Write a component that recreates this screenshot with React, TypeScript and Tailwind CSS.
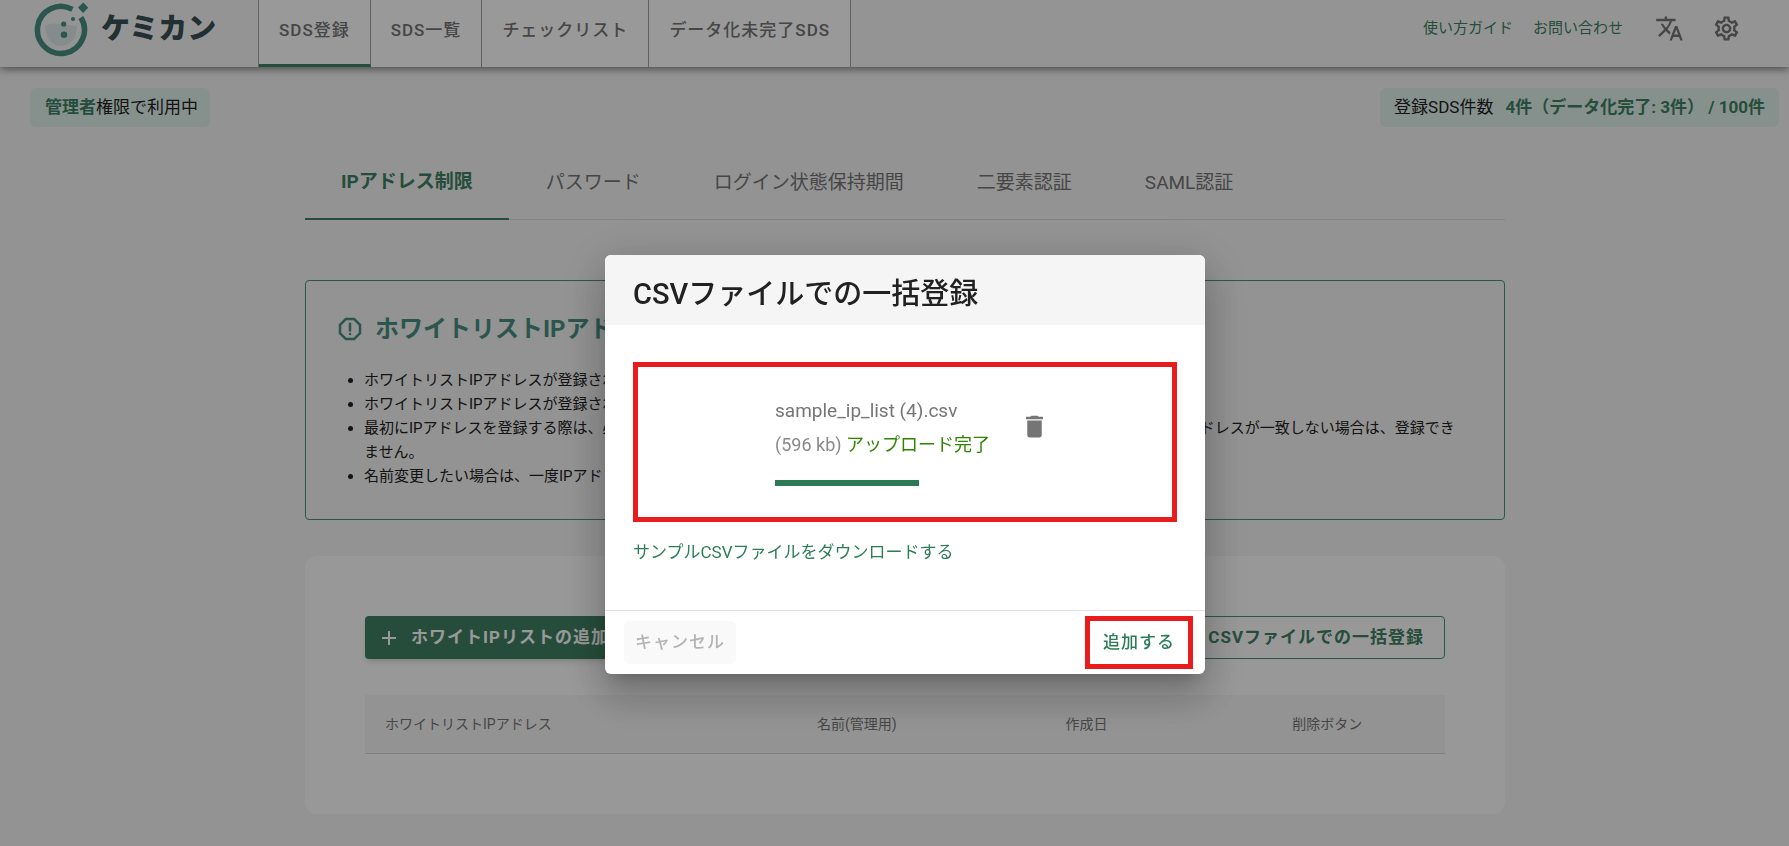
import React from "react";
import {
  MdAdd,
  MdDelete,
  MdOutlineReport,
  MdOutlineSettings,
  MdTranslate,
} from "react-icons/md";

const navItems = ["SDS登録", "SDS一覧", "チェックリスト", "データ化未完了SDS"];

const tabs = [
  "IPアドレス制限",
  "パスワード",
  "ログイン状態保持期間",
  "二要素認証",
  "SAML認証",
];

const notices = [
  "ホワイトリストIPアドレスが登録されていない場合は、制限なくログインできます。",
  "ホワイトリストIPアドレスが登録されている場合は、登録済みのIPからのみログインできます。",
  "最初にIPアドレスを登録する際は、必ず現在接続しているアドレスを含めて登録してください。現在の接続元と登録するIPアドレスが一致しない場合は、登録できません。",
  "名前変更したい場合は、一度IPアドレスを削除してから再度登録してください。",
];

const Logo: React.FC = () => (
  <a href="#" className="flex items-center gap-3 text-[#3a4f56]">
    <svg className="h-14 w-14" viewBox="0 0 56 56" fill="none">
      <path
        d="M12 24q4-3 9-2.5t10 1t13 1.5q0 9-5 15q-5 5-11 5q-7 0-11-5q-5-6-5-15z"
        fill="#deebe9"
      />
      <path
        d="M39.4 7.4A23.5 23.5 0 1 0 47.9 15.5"
        stroke="#478f82"
        strokeWidth="5.5"
      />
      <path d="M50.3 0.5l5 5.2-5.3 5.3-5-5.4z" fill="#478f82" />
      <circle cx="30.7" cy="22" r="2.6" fill="#478f82" />
      <circle cx="31" cy="32.7" r="3.2" fill="#478f82" />
      <circle cx="40" cy="17" r="2" fill="#478f82" />
    </svg>
    <span className="text-[29px] font-black">ケミカン</span>
  </a>
);

const Header: React.FC = () => (
  <header className="flex h-[67px] items-stretch bg-[#f7f7f7] pl-[33px] shadow-[0_2px_8px_rgba(0,0,0,0.5)]">
    <div className="flex w-[225px] shrink-0 items-center pb-2">
      <Logo />
    </div>
    <nav className="flex border-l border-[#a0a0a0] bg-white">
      {navItems.map((item, i) => (
        <a
          key={item}
          href="#"
          className={
            i === 0
              ? "flex items-center border-r border-b-3 border-r-[#a0a0a0] border-b-[#408163] px-5 pb-[3px] text-[17px] font-medium tracking-[1px] text-[#757575]"
              : "flex items-center border-r border-[#a0a0a0] px-5 pb-[6px] text-[17px] font-medium tracking-[1px] text-[#757575]"
          }
        >
          {item}
        </a>
      ))}
    </nav>
    <div className="ml-auto flex items-center gap-5 pr-12 pb-[10px] text-[15px] text-[#408163]">
      <a href="#">使い方ガイド</a>
      <a href="#">お問い合わせ</a>
      <button type="button" aria-label="言語" className="ml-3 text-[#757575]">
        <MdTranslate size={29} />
      </button>
      <button type="button" aria-label="設定" className="ml-2 text-[#757575]">
        <MdOutlineSettings size={29} />
      </button>
    </div>
  </header>
);

const StatusBar: React.FC = () => (
  <div className="flex h-[39px] items-stretch justify-between pr-[10px] pl-[30px] text-[17px] text-[#212121]">
    <p className="flex items-center rounded-md bg-[#e0f2ec] pr-3 pl-[15px]">
      <strong className="font-bold text-[#408163]">管理者</strong>権限で利用中
    </p>
    <p className="flex items-center gap-3 rounded-md bg-[#e0f2ec] px-[14px]">
      登録SDS件数
      <strong className="font-bold text-[#408163]">
        4件（データ化完了: 3件） / 100件
      </strong>
    </p>
  </div>
);

const Tabs: React.FC = () => (
  <nav className="flex h-[77px] gap-px border-b border-[#dddddd] text-[19px] text-[#757575]">
    {tabs.map((tab, i) => (
      <a
        key={tab}
        href="#"
        className={
          i === 0
            ? "-mb-px flex items-center border-b-2 border-[#408163] px-9 pt-1 font-bold text-[#408163]"
            : "flex items-center px-9 pt-1"
        }
      >
        {tab}
      </a>
    ))}
  </nav>
);

const Notice: React.FC = () => (
  <section className="mt-[60px] rounded border border-[#4a9080] pt-[30px] pr-11 pb-[31px] pl-[29px] text-[#212121]">
    <h2 className="flex items-center gap-[10px] text-2xl leading-9 font-bold text-[#478f82]">
      <MdOutlineReport size={30} />
      ホワイトリストIPアドレスについて
    </h2>
    <ul className="mt-[21px] list-disc pl-[29px] text-[15px] leading-6">
      {notices.map((notice) => (
        <li key={notice}>{notice}</li>
      ))}
    </ul>
  </section>
);

const WhiteList: React.FC = () => (
  <section className="mt-9 rounded-xl bg-[#fefefe] p-[60px]">
    <div className="flex justify-between">
      <button
        type="button"
        className="flex h-[43px] items-center gap-[10px] rounded bg-[#408163] px-3 text-[17px] font-bold tracking-[1px] text-white shadow-md"
      >
        <MdAdd size={24} />
        ホワイトIPリストの追加
      </button>
      <button
        type="button"
        className="h-[43px] rounded border border-[#4a9080] px-5 text-[17px] font-bold tracking-[1px] text-[#408163]"
      >
        CSVファイルでの一括登録
      </button>
    </div>
    <table className="mt-9 w-full table-fixed text-left text-sm text-[#757575]">
      <thead>
        <tr className="h-[58px] border-b border-[#d6d6d6] bg-[#f5f5f5]">
          <th className="w-[40%] px-5 font-normal">ホワイトリストIPアドレス</th>
          <th className="w-[23%] px-5 font-normal">名前(管理用)</th>
          <th className="w-[21%] px-5 font-normal">作成日</th>
          <th className="px-5 font-normal">削除ボタン</th>
        </tr>
      </thead>
    </table>
  </section>
);

const UploadDialog: React.FC = () => (
  <div className="fixed inset-0 flex items-start justify-center bg-black/40 pt-[255px] pl-[21px]">
    <div
      role="dialog"
      aria-modal="true"
      aria-labelledby="dialog-title"
      className="w-full max-w-[600px] overflow-hidden rounded-md bg-white shadow-[0_11px_15px_-7px_rgba(0,0,0,0.2),0_24px_38px_3px_rgba(0,0,0,0.14),0_9px_46px_8px_rgba(0,0,0,0.12)]"
    >
      <h2
        id="dialog-title"
        className="flex h-[70px] items-center bg-[#f5f5f5] px-7 pt-[10px] text-[29px] font-medium text-[#212121]"
      >
        CSVファイルでの一括登録
      </h2>

      <div className="h-[285px] px-7 pt-[37px]">
        {/* Uploaded file */}
        <div className="flex h-40 justify-center gap-[30px] border-[5px] border-[#e81c1c] pt-[27px] pl-[14px]">
          <div className="leading-[34px]">
            <p className="text-[19px] text-[#757575]">sample_ip_list (4).csv</p>
            <p className="text-lg leading-[34px] text-[#8a8a8a]">
              (596 kb) <span className="text-[#2e8500]">アップロード完了</span>
            </p>
            <div className="mt-[18px] h-[6px] w-36 bg-[#2f7a56]" />
          </div>
          <button
            type="button"
            aria-label="削除"
            className="mt-[18px] self-start text-[#757575]"
          >
            <MdDelete size={29} />
          </button>
        </div>
        <a href="#" className="mt-[18px] block text-[17px] text-[#2c7d57]">
          サンプルCSVファイルをダウンロードする
        </a>
      </div>

      <div className="flex h-16 items-center justify-between border-t border-[#e0e0e0] pr-3 pl-[19px]">
        <button
          type="button"
          disabled
          className="h-[43px] rounded-md bg-[#f9f9f9] px-[11px] text-[17px] font-medium tracking-[1px] text-[#b3b3b3]"
        >
          キャンセル
        </button>
        <button
          type="button"
          className="h-[53px] border-[5px] border-[#e81c1c] px-[13px] text-[17px] font-medium tracking-[1px] text-[#2c7d57]"
        >
          追加する
        </button>
      </div>
    </div>
  </div>
);

const App: React.FC = () => {
  return (
    <div className="min-h-screen bg-[#f5f5f5] font-[Roboto,'Noto_Sans_CJK_JP',sans-serif]">
      <Header />
      <main className="pt-[21px]">
        <StatusBar />
        <div className="pt-4 pl-[21px]">
          <div className="mx-auto max-w-[1200px]">
            <Tabs />
            <Notice />
            <WhiteList />
          </div>
        </div>
      </main>
      <UploadDialog />
    </div>
  );
};

export default App;
